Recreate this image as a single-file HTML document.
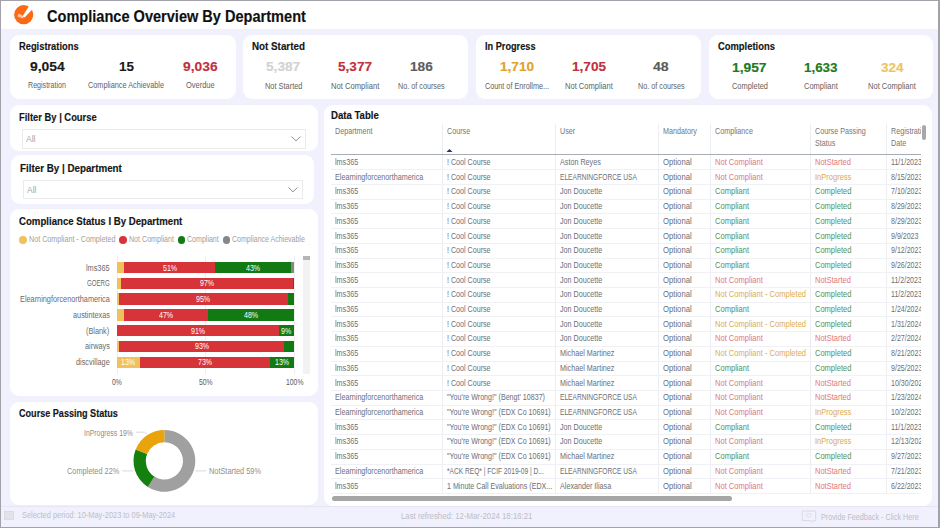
<!DOCTYPE html>
<html><head><meta charset="utf-8">
<style>
*{margin:0;padding:0;box-sizing:border-box}
html,body{width:940px;height:528px;overflow:hidden;background:#f1f1fd}
body{position:relative;font-family:"Liberation Sans", sans-serif;color:#000}
.root{position:absolute;left:0;top:0;width:940px;height:528px}
.a{position:absolute;white-space:nowrap}
.card{position:absolute;background:#fff;border-radius:9px}
</style></head><body><div class="root">

<div class="a" style="left:0;top:0;width:940px;height:28.8px;background:#fff"></div>
<svg class="a" style="left:0;top:0" width="40" height="30" viewBox="0 0 40 30">
<circle cx="23.7" cy="14.7" r="9.6" fill="#fa6a16"/>
<path d="M18.8 13.6 L24 16.4 L23 18.6 L17.4 16.4Z" fill="#fbc4a6"/>
<path d="M29.4 5.6 L33.2 8.4 L24.6 17.4 L22.6 16.3Z" fill="#fff"/>
</svg>
<div class="a" style="left:47.40px;top:8.99px;font-size:15.6px;line-height:15.6px;color:#111;font-weight:700;letter-spacing:0.000px;transform:scaleX(0.9336);transform-origin:0 0;-webkit-text-stroke:0.15px #111">Compliance Overview By Department</div>
<div class="card" style="left:10px;top:35px;width:226px;height:64px"></div>
<div class="a" style="left:18.70px;top:42.08px;font-size:10.3px;line-height:10.3px;color:#151515;font-weight:700;letter-spacing:0.000px;transform:scaleX(0.9055);transform-origin:0 0;-webkit-text-stroke:0.15px #151515">Registrations</div>
<div class="a" style="left:29.80px;top:59.79px;font-size:13.6px;line-height:13.6px;color:#1a1a1a;font-weight:700;letter-spacing:0.000px;transform:scaleX(1.0225);transform-origin:0 0;-webkit-text-stroke:0.15px #1a1a1a">9,054</div>
<div class="a" style="left:28.25px;top:81.12px;font-size:8.6px;line-height:8.6px;color:#5f5f5f;font-weight:400;letter-spacing:0.000px;transform:scaleX(0.8259);transform-origin:0 0">Registration</div>
<div class="a" style="left:118.55px;top:59.79px;font-size:13.6px;line-height:13.6px;color:#1a1a1a;font-weight:700;letter-spacing:0.000px;transform:scaleX(0.9850);transform-origin:0 0;-webkit-text-stroke:0.15px #1a1a1a">15</div>
<div class="a" style="left:88.00px;top:81.12px;font-size:8.6px;line-height:8.6px;color:#5f5f5f;font-weight:400;letter-spacing:0.000px;transform:scaleX(0.8501);transform-origin:0 0">Compliance Achievable</div>
<div class="a" style="left:183.00px;top:59.79px;font-size:13.6px;line-height:13.6px;color:#bf313d;font-weight:700;letter-spacing:0.000px;transform:scaleX(1.0166);transform-origin:0 0;-webkit-text-stroke:0.15px #bf313d">9,036</div>
<div class="a" style="left:185.95px;top:81.12px;font-size:8.6px;line-height:8.6px;color:#5f5f5f;font-weight:400;letter-spacing:0.000px;transform:scaleX(0.8701);transform-origin:0 0">Overdue</div>
<div class="card" style="left:243px;top:35px;width:225px;height:64px"></div>
<div class="a" style="left:251.90px;top:42.08px;font-size:10.3px;line-height:10.3px;color:#151515;font-weight:700;letter-spacing:0.000px;transform:scaleX(0.9530);transform-origin:0 0;-webkit-text-stroke:0.15px #151515">Not Started</div>
<div class="a" style="left:266.20px;top:60.49px;font-size:13.6px;line-height:13.6px;color:#d2d2d2;font-weight:700;letter-spacing:0.000px;transform:scaleX(1.0049);transform-origin:0 0;-webkit-text-stroke:0.15px #d2d2d2">5,387</div>
<div class="a" style="left:264.55px;top:81.82px;font-size:8.6px;line-height:8.6px;color:#5f5f5f;font-weight:400;letter-spacing:0.000px;transform:scaleX(0.8621);transform-origin:0 0">Not Started</div>
<div class="a" style="left:338.30px;top:60.49px;font-size:13.6px;line-height:13.6px;color:#bf313d;font-weight:700;letter-spacing:0.000px;transform:scaleX(0.9990);transform-origin:0 0;-webkit-text-stroke:0.15px #bf313d">5,377</div>
<div class="a" style="left:331.15px;top:81.82px;font-size:8.6px;line-height:8.6px;color:#5f5f5f;font-weight:400;letter-spacing:0.000px;transform:scaleX(0.8864);transform-origin:0 0">Not Compliant</div>
<div class="a" style="left:409.80px;top:60.49px;font-size:13.6px;line-height:13.6px;color:#5c5c5c;font-weight:700;letter-spacing:0.000px;transform:scaleX(1.0048);transform-origin:0 0;-webkit-text-stroke:0.15px #5c5c5c">186</div>
<div class="a" style="left:397.90px;top:81.82px;font-size:8.6px;line-height:8.6px;color:#5f5f5f;font-weight:400;letter-spacing:0.000px;transform:scaleX(0.8404);transform-origin:0 0">No. of courses</div>
<div class="card" style="left:476px;top:35px;width:225px;height:64px"></div>
<div class="a" style="left:484.90px;top:42.08px;font-size:10.3px;line-height:10.3px;color:#151515;font-weight:700;letter-spacing:0.000px;transform:scaleX(0.8911);transform-origin:0 0;-webkit-text-stroke:0.15px #151515">In Progress</div>
<div class="a" style="left:500.00px;top:60.49px;font-size:13.6px;line-height:13.6px;color:#e0a229;font-weight:700;letter-spacing:0.000px;transform:scaleX(0.9990);transform-origin:0 0;-webkit-text-stroke:0.15px #e0a229">1,710</div>
<div class="a" style="left:484.95px;top:81.82px;font-size:8.6px;line-height:8.6px;color:#5f5f5f;font-weight:400;letter-spacing:0.000px;transform:scaleX(0.8434);transform-origin:0 0">Count of Enrollme...</div>
<div class="a" style="left:571.70px;top:60.49px;font-size:13.6px;line-height:13.6px;color:#bf313d;font-weight:700;letter-spacing:0.000px;transform:scaleX(0.9990);transform-origin:0 0;-webkit-text-stroke:0.15px #bf313d">1,705</div>
<div class="a" style="left:564.75px;top:81.82px;font-size:8.6px;line-height:8.6px;color:#5f5f5f;font-weight:400;letter-spacing:0.000px;transform:scaleX(0.8791);transform-origin:0 0">Not Compliant</div>
<div class="a" style="left:652.95px;top:60.49px;font-size:13.6px;line-height:13.6px;color:#5c5c5c;font-weight:700;letter-spacing:0.000px;transform:scaleX(1.0378);transform-origin:0 0;-webkit-text-stroke:0.15px #5c5c5c">48</div>
<div class="a" style="left:637.50px;top:81.82px;font-size:8.6px;line-height:8.6px;color:#5f5f5f;font-weight:400;letter-spacing:0.000px;transform:scaleX(0.8404);transform-origin:0 0">No. of courses</div>
<div class="card" style="left:709px;top:35px;width:224px;height:64px"></div>
<div class="a" style="left:717.90px;top:42.08px;font-size:10.3px;line-height:10.3px;color:#151515;font-weight:700;letter-spacing:0.000px;transform:scaleX(0.9122);transform-origin:0 0;-webkit-text-stroke:0.15px #151515">Completions</div>
<div class="a" style="left:732.45px;top:60.79px;font-size:13.6px;line-height:13.6px;color:#1d7a1d;font-weight:700;letter-spacing:0.000px;transform:scaleX(1.0137);transform-origin:0 0;-webkit-text-stroke:0.15px #1d7a1d">1,957</div>
<div class="a" style="left:731.70px;top:81.92px;font-size:8.6px;line-height:8.6px;color:#5f5f5f;font-weight:400;letter-spacing:0.000px;transform:scaleX(0.8656);transform-origin:0 0">Completed</div>
<div class="a" style="left:804.05px;top:60.79px;font-size:13.6px;line-height:13.6px;color:#1d7a1d;font-weight:700;letter-spacing:0.000px;transform:scaleX(0.9843);transform-origin:0 0;-webkit-text-stroke:0.15px #1d7a1d">1,633</div>
<div class="a" style="left:803.90px;top:81.92px;font-size:8.6px;line-height:8.6px;color:#5f5f5f;font-weight:400;letter-spacing:0.000px;transform:scaleX(0.8730);transform-origin:0 0">Compliant</div>
<div class="a" style="left:880.95px;top:60.79px;font-size:13.6px;line-height:13.6px;color:#ecc466;font-weight:700;letter-spacing:0.000px;transform:scaleX(0.9916);transform-origin:0 0;-webkit-text-stroke:0.15px #ecc466">324</div>
<div class="a" style="left:868.30px;top:81.92px;font-size:8.6px;line-height:8.6px;color:#5f5f5f;font-weight:400;letter-spacing:0.000px;transform:scaleX(0.8772);transform-origin:0 0">Not Compliant</div>
<div class="card" style="left:10px;top:105px;width:307.5px;height:46.4px"></div>
<div class="a" style="left:18.50px;top:112.68px;font-size:10.3px;line-height:10.3px;color:#151515;font-weight:700;letter-spacing:0.000px;transform:scaleX(0.9109);transform-origin:0 0;-webkit-text-stroke:0.15px #151515">Filter By | Course</div>
<div class="a" style="left:21.5px;top:129px;width:284px;height:19.5px;border:1px solid #ebebeb;background:#fff"></div>
<div class="a" style="left:26.00px;top:135.29px;font-size:8.4px;line-height:8.4px;color:#a8a8a8;font-weight:400;letter-spacing:0.000px;transform:scaleX(1.0176);transform-origin:0 0">All</div>
<svg class="a" style="left:290px;top:134.5px" width="12" height="8" viewBox="0 0 12 8"><path d="M1.6 1.6 L6 5.8 L10.4 1.6" stroke="#7a7a7a" stroke-width="0.85" fill="none"/></svg>
<div class="card" style="left:11px;top:155.4px;width:302.6px;height:49px"></div>
<div class="a" style="left:19.80px;top:163.58px;font-size:10.3px;line-height:10.3px;color:#151515;font-weight:700;letter-spacing:0.000px;transform:scaleX(0.9519);transform-origin:0 0;-webkit-text-stroke:0.15px #151515">Filter By | Department</div>
<div class="a" style="left:22.5px;top:180px;width:280px;height:19px;border:1px solid #ebebeb;background:#fff"></div>
<div class="a" style="left:27.40px;top:186.39px;font-size:8.4px;line-height:8.4px;color:#a8a8a8;font-weight:400;letter-spacing:0.000px;transform:scaleX(1.0176);transform-origin:0 0">All</div>
<svg class="a" style="left:287px;top:185.5px" width="12" height="8" viewBox="0 0 12 8"><path d="M1.6 1.6 L6 5.8 L10.4 1.6" stroke="#7a7a7a" stroke-width="0.85" fill="none"/></svg>
<div class="card" style="left:10px;top:209px;width:307.5px;height:187px"></div>
<div class="a" style="left:18.50px;top:217.18px;font-size:10.3px;line-height:10.3px;color:#151515;font-weight:700;letter-spacing:0.000px;transform:scaleX(0.9355);transform-origin:0 0;-webkit-text-stroke:0.15px #151515">Compliance Status I By Department</div>
<div class="a" style="left:19.400000000000002px;top:236.0px;width:7.8px;height:7.8px;border-radius:50%;background:#efc25c"></div>
<div class="a" style="left:29.00px;top:236.46px;font-size:8.2px;line-height:8.2px;color:#a0a0a0;font-weight:400;letter-spacing:0.000px;transform:scaleX(0.8746);transform-origin:0 0">Not Compliant - Completed</div>
<div class="a" style="left:119.3px;top:236.0px;width:7.8px;height:7.8px;border-radius:50%;background:#d63439"></div>
<div class="a" style="left:128.60px;top:236.46px;font-size:8.2px;line-height:8.2px;color:#a0a0a0;font-weight:400;letter-spacing:0.000px;transform:scaleX(0.8661);transform-origin:0 0">Not Compliant</div>
<div class="a" style="left:177.7px;top:236.0px;width:7.8px;height:7.8px;border-radius:50%;background:#127a12"></div>
<div class="a" style="left:186.90px;top:236.46px;font-size:8.2px;line-height:8.2px;color:#a0a0a0;font-weight:400;letter-spacing:0.000px;transform:scaleX(0.8614);transform-origin:0 0">Compliant</div>
<div class="a" style="left:222.5px;top:236.0px;width:7.8px;height:7.8px;border-radius:50%;background:#878787"></div>
<div class="a" style="left:231.80px;top:236.46px;font-size:8.2px;line-height:8.2px;color:#a0a0a0;font-weight:400;letter-spacing:0.000px;transform:scaleX(0.8552);transform-origin:0 0">Compliance Achievable</div>
<div class="a" style="left:116.5px;top:255.5px;width:1px;height:118px;background:#efefef"></div>
<div class="a" style="left:205.1px;top:255.5px;width:1px;height:118px;background:#efefef"></div>
<div class="a" style="left:294.0px;top:255.5px;width:1px;height:118px;background:#efefef"></div>
<div class="a" style="left:303px;top:256px;width:7px;height:118px;background:#f2f2f2"></div>
<div class="a" style="left:303px;top:256px;width:7px;height:3.5px;background:#b5b5b5"></div>
<div class="a" style="left:86.02px;top:263.57px;font-size:8.3px;line-height:8.3px;color:#6a6a6a;font-weight:400;letter-spacing:0.000px;transform:scaleX(0.8813);transform-origin:0 0">lms365</div>
<div class="a" style="left:116.80px;top:261.90px;width:7.63px;height:11.4px;background:#efc25c"></div>
<div class="a" style="left:124.43px;top:261.90px;width:90.83px;height:11.4px;background:#d63439"></div>
<div class="a" style="left:162.78px;top:263.57px;font-size:8.3px;line-height:8.3px;color:#fff;font-weight:400;letter-spacing:0.000px;transform:scaleX(0.8501);transform-origin:0 0">51%</div>
<div class="a" style="left:215.26px;top:261.90px;width:75.57px;height:11.4px;background:#127a12"></div>
<div class="a" style="left:245.98px;top:263.57px;font-size:8.3px;line-height:8.3px;color:#fff;font-weight:400;letter-spacing:0.000px;transform:scaleX(0.8501);transform-origin:0 0">43%</div>
<div class="a" style="left:290.83px;top:261.90px;width:3.37px;height:11.4px;background:#878787"></div>
<div class="a" style="left:86.82px;top:279.37px;font-size:8.3px;line-height:8.3px;color:#6a6a6a;font-weight:400;letter-spacing:0.000px;transform:scaleX(0.7373);transform-origin:0 0">GOERG</div>
<div class="a" style="left:116.80px;top:277.70px;width:4.08px;height:11.4px;background:#efc25c"></div>
<div class="a" style="left:120.88px;top:277.70px;width:172.26px;height:11.4px;background:#d63439"></div>
<div class="a" style="left:199.95px;top:279.37px;font-size:8.3px;line-height:8.3px;color:#fff;font-weight:400;letter-spacing:0.000px;transform:scaleX(0.8501);transform-origin:0 0">97%</div>
<div class="a" style="left:293.14px;top:277.70px;width:1.06px;height:11.4px;background:#127a12"></div>
<div class="a" style="left:19.74px;top:295.07px;font-size:8.3px;line-height:8.3px;color:#6a6a6a;font-weight:400;letter-spacing:0.000px;transform:scaleX(0.8813);transform-origin:0 0">Elearningforcenorthamerica</div>
<div class="a" style="left:116.80px;top:293.40px;width:2.13px;height:11.4px;background:#efc25c"></div>
<div class="a" style="left:118.93px;top:293.40px;width:169.06px;height:11.4px;background:#d63439"></div>
<div class="a" style="left:196.40px;top:295.07px;font-size:8.3px;line-height:8.3px;color:#fff;font-weight:400;letter-spacing:0.000px;transform:scaleX(0.8501);transform-origin:0 0">95%</div>
<div class="a" style="left:287.99px;top:293.40px;width:6.21px;height:11.4px;background:#127a12"></div>
<div class="a" style="left:72.60px;top:310.87px;font-size:8.3px;line-height:8.3px;color:#6a6a6a;font-weight:400;letter-spacing:0.000px;transform:scaleX(0.8813);transform-origin:0 0">austintexas</div>
<div class="a" style="left:116.80px;top:309.20px;width:7.63px;height:11.4px;background:#efc25c"></div>
<div class="a" style="left:124.43px;top:309.20px;width:83.91px;height:11.4px;background:#d63439"></div>
<div class="a" style="left:159.32px;top:310.87px;font-size:8.3px;line-height:8.3px;color:#fff;font-weight:400;letter-spacing:0.000px;transform:scaleX(0.8501);transform-origin:0 0">47%</div>
<div class="a" style="left:208.34px;top:309.20px;width:85.86px;height:11.4px;background:#127a12"></div>
<div class="a" style="left:244.21px;top:310.87px;font-size:8.3px;line-height:8.3px;color:#fff;font-weight:400;letter-spacing:0.000px;transform:scaleX(0.8501);transform-origin:0 0">48%</div>
<div class="a" style="left:86.43px;top:326.57px;font-size:8.3px;line-height:8.3px;color:#6a6a6a;font-weight:400;letter-spacing:0.000px;transform:scaleX(0.8813);transform-origin:0 0">(Blank)</div>
<div class="a" style="left:116.80px;top:324.90px;width:162.14px;height:11.4px;background:#d63439"></div>
<div class="a" style="left:190.81px;top:326.57px;font-size:8.3px;line-height:8.3px;color:#fff;font-weight:400;letter-spacing:0.000px;transform:scaleX(0.8501);transform-origin:0 0">91%</div>
<div class="a" style="left:278.94px;top:324.90px;width:15.26px;height:11.4px;background:#127a12"></div>
<div class="a" style="left:281.47px;top:326.57px;font-size:8.3px;line-height:8.3px;color:#fff;font-weight:400;letter-spacing:0.000px;transform:scaleX(0.8501);transform-origin:0 0">9%</div>
<div class="a" style="left:84.80px;top:342.27px;font-size:8.3px;line-height:8.3px;color:#6a6a6a;font-weight:400;letter-spacing:0.000px;transform:scaleX(0.8813);transform-origin:0 0">airways</div>
<div class="a" style="left:116.80px;top:340.60px;width:2.31px;height:11.4px;background:#efc25c"></div>
<div class="a" style="left:119.11px;top:340.60px;width:165.34px;height:11.4px;background:#d63439"></div>
<div class="a" style="left:194.71px;top:342.27px;font-size:8.3px;line-height:8.3px;color:#fff;font-weight:400;letter-spacing:0.000px;transform:scaleX(0.8501);transform-origin:0 0">93%</div>
<div class="a" style="left:284.44px;top:340.60px;width:9.76px;height:11.4px;background:#127a12"></div>
<div class="a" style="left:75.85px;top:358.27px;font-size:8.3px;line-height:8.3px;color:#6a6a6a;font-weight:400;letter-spacing:0.000px;transform:scaleX(0.8813);transform-origin:0 0">discvillage</div>
<div class="a" style="left:116.80px;top:356.60px;width:23.42px;height:11.4px;background:#efc25c"></div>
<div class="a" style="left:121.45px;top:358.27px;font-size:8.3px;line-height:8.3px;color:#fff;font-weight:400;letter-spacing:0.000px;transform:scaleX(0.8501);transform-origin:0 0">13%</div>
<div class="a" style="left:140.22px;top:356.60px;width:129.32px;height:11.4px;background:#d63439"></div>
<div class="a" style="left:197.82px;top:358.27px;font-size:8.3px;line-height:8.3px;color:#fff;font-weight:400;letter-spacing:0.000px;transform:scaleX(0.8501);transform-origin:0 0">73%</div>
<div class="a" style="left:269.54px;top:356.60px;width:24.66px;height:11.4px;background:#127a12"></div>
<div class="a" style="left:274.81px;top:358.27px;font-size:8.3px;line-height:8.3px;color:#fff;font-weight:400;letter-spacing:0.000px;transform:scaleX(0.8501);transform-origin:0 0">13%</div>
<div class="a" style="left:111.86px;top:378.66px;font-size:8.2px;line-height:8.2px;color:#5a5a5a;font-weight:400;letter-spacing:0.000px;transform:scaleX(0.8341);transform-origin:0 0">0%</div>
<div class="a" style="left:198.95px;top:378.66px;font-size:8.2px;line-height:8.2px;color:#5a5a5a;font-weight:400;letter-spacing:0.000px;transform:scaleX(0.8341);transform-origin:0 0">50%</div>
<div class="a" style="left:285.95px;top:378.66px;font-size:8.2px;line-height:8.2px;color:#5a5a5a;font-weight:400;letter-spacing:0.000px;transform:scaleX(0.8341);transform-origin:0 0">100%</div>
<div class="card" style="left:10px;top:402px;width:307.5px;height:102.5px"></div>
<div class="a" style="left:18.50px;top:409.38px;font-size:10.3px;line-height:10.3px;color:#151515;font-weight:700;letter-spacing:0.000px;transform:scaleX(0.8815);transform-origin:0 0;-webkit-text-stroke:0.15px #151515">Course Passing Status</div>
<svg class="a" style="left:0;top:0" width="320" height="528" viewBox="0 0 320 528">
<path d="M164.40 430.00 A30.9 30.9 0 1 1 147.84 486.99 L154.43 476.60 A18.6 18.6 0 1 0 164.40 442.30Z" fill="#a0a0a0"/>
<path d="M147.84 486.99 A30.9 30.9 0 0 1 135.67 449.52 L147.11 454.05 A18.6 18.6 0 0 0 154.43 476.60Z" fill="#13800f"/>
<path d="M135.67 449.52 A30.9 30.9 0 0 1 164.40 430.00 L164.40 442.30 A18.6 18.6 0 0 0 147.11 454.05Z" fill="#e9a30b"/>
<path d="M136 432.2 H144.7 L147.5 434.8" stroke="#cfcfcf" stroke-width="0.8" fill="none"/>
<path d="M122.3 470.9 H133.5" stroke="#cfcfcf" stroke-width="0.8" fill="none"/>
<path d="M195.5 470.9 H206" stroke="#cfcfcf" stroke-width="0.8" fill="none"/>
</svg>
<div class="a" style="left:84.40px;top:429.07px;font-size:8.3px;line-height:8.3px;color:#8e8e8e;font-weight:400;letter-spacing:0.000px;transform:scaleX(0.8281);transform-origin:0 0">InProgress 19%</div>
<div class="a" style="left:67.00px;top:467.37px;font-size:8.3px;line-height:8.3px;color:#8e8e8e;font-weight:400;letter-spacing:0.000px;transform:scaleX(0.8856);transform-origin:0 0">Completed 22%</div>
<div class="a" style="left:209.30px;top:467.37px;font-size:8.3px;line-height:8.3px;color:#8e8e8e;font-weight:400;letter-spacing:0.000px;transform:scaleX(0.8875);transform-origin:0 0">NotStarted 59%</div>
<div class="card" style="left:323.5px;top:105px;width:608px;height:400.5px"></div>
<div class="a" style="left:331.00px;top:111.18px;font-size:10.3px;line-height:10.3px;color:#151515;font-weight:700;letter-spacing:0.000px;transform:scaleX(0.9313);transform-origin:0 0;-webkit-text-stroke:0.15px #151515">Data Table</div>
<div class="a" style="left:331px;top:124px;width:590px;height:370px;overflow:hidden">
<div class="a" style="left:3.80px;top:4.36px;font-size:8.2px;line-height:8.2px;color:#767676;transform:scaleX(0.8780);transform-origin:0 0">Department</div>
<div class="a" style="left:116.30px;top:4.36px;font-size:8.2px;line-height:8.2px;color:#767676;transform:scaleX(0.8780);transform-origin:0 0">Course</div>
<div class="a" style="left:229.10px;top:4.36px;font-size:8.2px;line-height:8.2px;color:#767676;transform:scaleX(0.8780);transform-origin:0 0">User</div>
<div class="a" style="left:332.10px;top:4.36px;font-size:8.2px;line-height:8.2px;color:#767676;transform:scaleX(0.8780);transform-origin:0 0">Mandatory</div>
<div class="a" style="left:383.80px;top:4.36px;font-size:8.2px;line-height:8.2px;color:#767676;transform:scaleX(0.8780);transform-origin:0 0">Compliance</div>
<div class="a" style="left:484.20px;top:4.36px;font-size:8.2px;line-height:8.2px;color:#767676;transform:scaleX(0.8780);transform-origin:0 0">Course Passing</div>
<div class="a" style="left:559.70px;top:4.36px;font-size:8.2px;line-height:8.2px;color:#767676;transform:scaleX(0.8780);transform-origin:0 0">Registrati</div>
<div class="a" style="left:484.20px;top:16.16px;font-size:8.2px;line-height:8.2px;color:#767676;transform:scaleX(0.8780);transform-origin:0 0">Status</div>
<div class="a" style="left:559.70px;top:16.16px;font-size:8.2px;line-height:8.2px;color:#767676;transform:scaleX(0.8780);transform-origin:0 0">Date</div>
<div class="a" style="left:111.00px;top:0;width:1px;height:370px;background:#eceef2"></div>
<div class="a" style="left:223.80px;top:0;width:1px;height:370px;background:#eceef2"></div>
<div class="a" style="left:326.80px;top:0;width:1px;height:370px;background:#eceef2"></div>
<div class="a" style="left:378.50px;top:0;width:1px;height:370px;background:#eceef2"></div>
<div class="a" style="left:478.90px;top:0;width:1px;height:370px;background:#eceef2"></div>
<div class="a" style="left:555.00px;top:0;width:1px;height:370px;background:#eceef2"></div>
<div class="a" style="left:0;top:29.599999999999994px;width:590px;height:1.4px;background:#a7acb5"></div>
<svg class="a" style="left:115px;top:23.5px" width="7" height="5" viewBox="0 0 7 5"><path d="M0.5 4 L3.5 1 L6.5 4Z" fill="#2a3550"/></svg>
<div class="a" style="left:0;top:45.30px;width:590px;height:1px;background:#f0f1f4"></div>
<div class="a" style="left:3.80px;top:34.96px;font-size:8.2px;line-height:8.2px;color:#6a6f79;transform:scaleX(0.8780);transform-origin:0 0">lms365</div>
<div class="a" style="left:116.30px;top:34.96px;font-size:8.2px;line-height:8.2px;color:#6a6f79;transform:scaleX(0.8693);transform-origin:0 0">! Cool Course</div>
<div class="a" style="left:229.10px;top:34.96px;font-size:8.2px;line-height:8.2px;color:#6a6f79;transform:scaleX(0.8780);transform-origin:0 0">Aston Reyes</div>
<div class="a" style="left:332.10px;top:34.96px;font-size:8.2px;line-height:8.2px;color:#6a6f79;transform:scaleX(0.9395);transform-origin:0 0">Optional</div>
<div class="a" style="left:383.80px;top:34.96px;font-size:8.2px;line-height:8.2px;color:#e07880;transform:scaleX(0.9220);transform-origin:0 0">Not Compliant</div>
<div class="a" style="left:484.20px;top:34.96px;font-size:8.2px;line-height:8.2px;color:#e07880;transform:scaleX(0.9176);transform-origin:0 0">NotStarted</div>
<div class="a" style="left:559.70px;top:34.96px;font-size:8.2px;line-height:8.2px;color:#6a6f79;transform:scaleX(0.8605);transform-origin:0 0">11/1/2023</div>
<div class="a" style="left:0;top:60.01px;width:590px;height:1px;background:#f0f1f4"></div>
<div class="a" style="left:3.80px;top:49.67px;font-size:8.2px;line-height:8.2px;color:#6a6f79;transform:scaleX(0.8780);transform-origin:0 0">Elearningforcenorthamerica</div>
<div class="a" style="left:116.30px;top:49.67px;font-size:8.2px;line-height:8.2px;color:#6a6f79;transform:scaleX(0.8693);transform-origin:0 0">! Cool Course</div>
<div class="a" style="left:229.10px;top:49.67px;font-size:8.2px;line-height:8.2px;color:#6a6f79;transform:scaleX(0.8078);transform-origin:0 0">ELEARNINGFORCE USA</div>
<div class="a" style="left:332.10px;top:49.67px;font-size:8.2px;line-height:8.2px;color:#6a6f79;transform:scaleX(0.9395);transform-origin:0 0">Optional</div>
<div class="a" style="left:383.80px;top:49.67px;font-size:8.2px;line-height:8.2px;color:#e07880;transform:scaleX(0.9220);transform-origin:0 0">Not Compliant</div>
<div class="a" style="left:484.20px;top:49.67px;font-size:8.2px;line-height:8.2px;color:#ddaa45;transform:scaleX(0.9176);transform-origin:0 0">InProgress</div>
<div class="a" style="left:559.70px;top:49.67px;font-size:8.2px;line-height:8.2px;color:#6a6f79;transform:scaleX(0.8605);transform-origin:0 0">8/15/2023</div>
<div class="a" style="left:0;top:74.72px;width:590px;height:1px;background:#f0f1f4"></div>
<div class="a" style="left:3.80px;top:64.38px;font-size:8.2px;line-height:8.2px;color:#6a6f79;transform:scaleX(0.8780);transform-origin:0 0">lms365</div>
<div class="a" style="left:116.30px;top:64.38px;font-size:8.2px;line-height:8.2px;color:#6a6f79;transform:scaleX(0.8693);transform-origin:0 0">! Cool Course</div>
<div class="a" style="left:229.10px;top:64.38px;font-size:8.2px;line-height:8.2px;color:#6a6f79;transform:scaleX(0.8780);transform-origin:0 0">Jon Doucette</div>
<div class="a" style="left:332.10px;top:64.38px;font-size:8.2px;line-height:8.2px;color:#6a6f79;transform:scaleX(0.9395);transform-origin:0 0">Optional</div>
<div class="a" style="left:383.80px;top:64.38px;font-size:8.2px;line-height:8.2px;color:#579250;transform:scaleX(0.9220);transform-origin:0 0">Compliant</div>
<div class="a" style="left:484.20px;top:64.38px;font-size:8.2px;line-height:8.2px;color:#579250;transform:scaleX(0.9176);transform-origin:0 0">Completed</div>
<div class="a" style="left:559.70px;top:64.38px;font-size:8.2px;line-height:8.2px;color:#6a6f79;transform:scaleX(0.8605);transform-origin:0 0">7/10/2023</div>
<div class="a" style="left:0;top:89.43px;width:590px;height:1px;background:#f0f1f4"></div>
<div class="a" style="left:3.80px;top:79.09px;font-size:8.2px;line-height:8.2px;color:#6a6f79;transform:scaleX(0.8780);transform-origin:0 0">lms365</div>
<div class="a" style="left:116.30px;top:79.09px;font-size:8.2px;line-height:8.2px;color:#6a6f79;transform:scaleX(0.8693);transform-origin:0 0">! Cool Course</div>
<div class="a" style="left:229.10px;top:79.09px;font-size:8.2px;line-height:8.2px;color:#6a6f79;transform:scaleX(0.8780);transform-origin:0 0">Jon Doucette</div>
<div class="a" style="left:332.10px;top:79.09px;font-size:8.2px;line-height:8.2px;color:#6a6f79;transform:scaleX(0.9395);transform-origin:0 0">Optional</div>
<div class="a" style="left:383.80px;top:79.09px;font-size:8.2px;line-height:8.2px;color:#579250;transform:scaleX(0.9220);transform-origin:0 0">Compliant</div>
<div class="a" style="left:484.20px;top:79.09px;font-size:8.2px;line-height:8.2px;color:#579250;transform:scaleX(0.9176);transform-origin:0 0">Completed</div>
<div class="a" style="left:559.70px;top:79.09px;font-size:8.2px;line-height:8.2px;color:#6a6f79;transform:scaleX(0.8605);transform-origin:0 0">8/29/2023</div>
<div class="a" style="left:0;top:104.14px;width:590px;height:1px;background:#f0f1f4"></div>
<div class="a" style="left:3.80px;top:93.80px;font-size:8.2px;line-height:8.2px;color:#6a6f79;transform:scaleX(0.8780);transform-origin:0 0">lms365</div>
<div class="a" style="left:116.30px;top:93.80px;font-size:8.2px;line-height:8.2px;color:#6a6f79;transform:scaleX(0.8693);transform-origin:0 0">! Cool Course</div>
<div class="a" style="left:229.10px;top:93.80px;font-size:8.2px;line-height:8.2px;color:#6a6f79;transform:scaleX(0.8780);transform-origin:0 0">Jon Doucette</div>
<div class="a" style="left:332.10px;top:93.80px;font-size:8.2px;line-height:8.2px;color:#6a6f79;transform:scaleX(0.9395);transform-origin:0 0">Optional</div>
<div class="a" style="left:383.80px;top:93.80px;font-size:8.2px;line-height:8.2px;color:#579250;transform:scaleX(0.9220);transform-origin:0 0">Compliant</div>
<div class="a" style="left:484.20px;top:93.80px;font-size:8.2px;line-height:8.2px;color:#579250;transform:scaleX(0.9176);transform-origin:0 0">Completed</div>
<div class="a" style="left:559.70px;top:93.80px;font-size:8.2px;line-height:8.2px;color:#6a6f79;transform:scaleX(0.8605);transform-origin:0 0">8/29/2023</div>
<div class="a" style="left:0;top:118.85px;width:590px;height:1px;background:#f0f1f4"></div>
<div class="a" style="left:3.80px;top:108.51px;font-size:8.2px;line-height:8.2px;color:#6a6f79;transform:scaleX(0.8780);transform-origin:0 0">lms365</div>
<div class="a" style="left:116.30px;top:108.51px;font-size:8.2px;line-height:8.2px;color:#6a6f79;transform:scaleX(0.8693);transform-origin:0 0">! Cool Course</div>
<div class="a" style="left:229.10px;top:108.51px;font-size:8.2px;line-height:8.2px;color:#6a6f79;transform:scaleX(0.8780);transform-origin:0 0">Jon Doucette</div>
<div class="a" style="left:332.10px;top:108.51px;font-size:8.2px;line-height:8.2px;color:#6a6f79;transform:scaleX(0.9395);transform-origin:0 0">Optional</div>
<div class="a" style="left:383.80px;top:108.51px;font-size:8.2px;line-height:8.2px;color:#579250;transform:scaleX(0.9220);transform-origin:0 0">Compliant</div>
<div class="a" style="left:484.20px;top:108.51px;font-size:8.2px;line-height:8.2px;color:#579250;transform:scaleX(0.9176);transform-origin:0 0">Completed</div>
<div class="a" style="left:559.70px;top:108.51px;font-size:8.2px;line-height:8.2px;color:#6a6f79;transform:scaleX(0.8605);transform-origin:0 0">9/9/2023</div>
<div class="a" style="left:0;top:133.56px;width:590px;height:1px;background:#f0f1f4"></div>
<div class="a" style="left:3.80px;top:123.22px;font-size:8.2px;line-height:8.2px;color:#6a6f79;transform:scaleX(0.8780);transform-origin:0 0">lms365</div>
<div class="a" style="left:116.30px;top:123.22px;font-size:8.2px;line-height:8.2px;color:#6a6f79;transform:scaleX(0.8693);transform-origin:0 0">! Cool Course</div>
<div class="a" style="left:229.10px;top:123.22px;font-size:8.2px;line-height:8.2px;color:#6a6f79;transform:scaleX(0.8780);transform-origin:0 0">Jon Doucette</div>
<div class="a" style="left:332.10px;top:123.22px;font-size:8.2px;line-height:8.2px;color:#6a6f79;transform:scaleX(0.9395);transform-origin:0 0">Optional</div>
<div class="a" style="left:383.80px;top:123.22px;font-size:8.2px;line-height:8.2px;color:#579250;transform:scaleX(0.9220);transform-origin:0 0">Compliant</div>
<div class="a" style="left:484.20px;top:123.22px;font-size:8.2px;line-height:8.2px;color:#579250;transform:scaleX(0.9176);transform-origin:0 0">Completed</div>
<div class="a" style="left:559.70px;top:123.22px;font-size:8.2px;line-height:8.2px;color:#6a6f79;transform:scaleX(0.8605);transform-origin:0 0">9/12/2023</div>
<div class="a" style="left:0;top:148.27px;width:590px;height:1px;background:#f0f1f4"></div>
<div class="a" style="left:3.80px;top:137.93px;font-size:8.2px;line-height:8.2px;color:#6a6f79;transform:scaleX(0.8780);transform-origin:0 0">lms365</div>
<div class="a" style="left:116.30px;top:137.93px;font-size:8.2px;line-height:8.2px;color:#6a6f79;transform:scaleX(0.8693);transform-origin:0 0">! Cool Course</div>
<div class="a" style="left:229.10px;top:137.93px;font-size:8.2px;line-height:8.2px;color:#6a6f79;transform:scaleX(0.8780);transform-origin:0 0">Jon Doucette</div>
<div class="a" style="left:332.10px;top:137.93px;font-size:8.2px;line-height:8.2px;color:#6a6f79;transform:scaleX(0.9395);transform-origin:0 0">Optional</div>
<div class="a" style="left:383.80px;top:137.93px;font-size:8.2px;line-height:8.2px;color:#579250;transform:scaleX(0.9220);transform-origin:0 0">Compliant</div>
<div class="a" style="left:484.20px;top:137.93px;font-size:8.2px;line-height:8.2px;color:#579250;transform:scaleX(0.9176);transform-origin:0 0">Completed</div>
<div class="a" style="left:559.70px;top:137.93px;font-size:8.2px;line-height:8.2px;color:#6a6f79;transform:scaleX(0.8605);transform-origin:0 0">9/26/2023</div>
<div class="a" style="left:0;top:162.98px;width:590px;height:1px;background:#f0f1f4"></div>
<div class="a" style="left:3.80px;top:152.64px;font-size:8.2px;line-height:8.2px;color:#6a6f79;transform:scaleX(0.8780);transform-origin:0 0">lms365</div>
<div class="a" style="left:116.30px;top:152.64px;font-size:8.2px;line-height:8.2px;color:#6a6f79;transform:scaleX(0.8693);transform-origin:0 0">! Cool Course</div>
<div class="a" style="left:229.10px;top:152.64px;font-size:8.2px;line-height:8.2px;color:#6a6f79;transform:scaleX(0.8780);transform-origin:0 0">Jon Doucette</div>
<div class="a" style="left:332.10px;top:152.64px;font-size:8.2px;line-height:8.2px;color:#6a6f79;transform:scaleX(0.9395);transform-origin:0 0">Optional</div>
<div class="a" style="left:383.80px;top:152.64px;font-size:8.2px;line-height:8.2px;color:#e07880;transform:scaleX(0.9220);transform-origin:0 0">Not Compliant</div>
<div class="a" style="left:484.20px;top:152.64px;font-size:8.2px;line-height:8.2px;color:#e07880;transform:scaleX(0.9176);transform-origin:0 0">NotStarted</div>
<div class="a" style="left:559.70px;top:152.64px;font-size:8.2px;line-height:8.2px;color:#6a6f79;transform:scaleX(0.8605);transform-origin:0 0">11/2/2023</div>
<div class="a" style="left:0;top:177.69px;width:590px;height:1px;background:#f0f1f4"></div>
<div class="a" style="left:3.80px;top:167.35px;font-size:8.2px;line-height:8.2px;color:#6a6f79;transform:scaleX(0.8780);transform-origin:0 0">lms365</div>
<div class="a" style="left:116.30px;top:167.35px;font-size:8.2px;line-height:8.2px;color:#6a6f79;transform:scaleX(0.8693);transform-origin:0 0">! Cool Course</div>
<div class="a" style="left:229.10px;top:167.35px;font-size:8.2px;line-height:8.2px;color:#6a6f79;transform:scaleX(0.8780);transform-origin:0 0">Jon Doucette</div>
<div class="a" style="left:332.10px;top:167.35px;font-size:8.2px;line-height:8.2px;color:#6a6f79;transform:scaleX(0.9395);transform-origin:0 0">Optional</div>
<div class="a" style="left:383.80px;top:167.35px;font-size:8.2px;line-height:8.2px;color:#dcad50;transform:scaleX(0.9220);transform-origin:0 0">Not Compliant - Completed</div>
<div class="a" style="left:484.20px;top:167.35px;font-size:8.2px;line-height:8.2px;color:#579250;transform:scaleX(0.9176);transform-origin:0 0">Completed</div>
<div class="a" style="left:559.70px;top:167.35px;font-size:8.2px;line-height:8.2px;color:#6a6f79;transform:scaleX(0.8605);transform-origin:0 0">11/2/2023</div>
<div class="a" style="left:0;top:192.40px;width:590px;height:1px;background:#f0f1f4"></div>
<div class="a" style="left:3.80px;top:182.06px;font-size:8.2px;line-height:8.2px;color:#6a6f79;transform:scaleX(0.8780);transform-origin:0 0">lms365</div>
<div class="a" style="left:116.30px;top:182.06px;font-size:8.2px;line-height:8.2px;color:#6a6f79;transform:scaleX(0.8693);transform-origin:0 0">! Cool Course</div>
<div class="a" style="left:229.10px;top:182.06px;font-size:8.2px;line-height:8.2px;color:#6a6f79;transform:scaleX(0.8780);transform-origin:0 0">Jon Doucette</div>
<div class="a" style="left:332.10px;top:182.06px;font-size:8.2px;line-height:8.2px;color:#6a6f79;transform:scaleX(0.9395);transform-origin:0 0">Optional</div>
<div class="a" style="left:383.80px;top:182.06px;font-size:8.2px;line-height:8.2px;color:#579250;transform:scaleX(0.9220);transform-origin:0 0">Compliant</div>
<div class="a" style="left:484.20px;top:182.06px;font-size:8.2px;line-height:8.2px;color:#579250;transform:scaleX(0.9176);transform-origin:0 0">Completed</div>
<div class="a" style="left:559.70px;top:182.06px;font-size:8.2px;line-height:8.2px;color:#6a6f79;transform:scaleX(0.8605);transform-origin:0 0">1/24/2024</div>
<div class="a" style="left:0;top:207.11px;width:590px;height:1px;background:#f0f1f4"></div>
<div class="a" style="left:3.80px;top:196.77px;font-size:8.2px;line-height:8.2px;color:#6a6f79;transform:scaleX(0.8780);transform-origin:0 0">lms365</div>
<div class="a" style="left:116.30px;top:196.77px;font-size:8.2px;line-height:8.2px;color:#6a6f79;transform:scaleX(0.8693);transform-origin:0 0">! Cool Course</div>
<div class="a" style="left:229.10px;top:196.77px;font-size:8.2px;line-height:8.2px;color:#6a6f79;transform:scaleX(0.8780);transform-origin:0 0">Jon Doucette</div>
<div class="a" style="left:332.10px;top:196.77px;font-size:8.2px;line-height:8.2px;color:#6a6f79;transform:scaleX(0.9395);transform-origin:0 0">Optional</div>
<div class="a" style="left:383.80px;top:196.77px;font-size:8.2px;line-height:8.2px;color:#dcad50;transform:scaleX(0.9220);transform-origin:0 0">Not Compliant - Completed</div>
<div class="a" style="left:484.20px;top:196.77px;font-size:8.2px;line-height:8.2px;color:#579250;transform:scaleX(0.9176);transform-origin:0 0">Completed</div>
<div class="a" style="left:559.70px;top:196.77px;font-size:8.2px;line-height:8.2px;color:#6a6f79;transform:scaleX(0.8605);transform-origin:0 0">1/31/2024</div>
<div class="a" style="left:0;top:221.82px;width:590px;height:1px;background:#f0f1f4"></div>
<div class="a" style="left:3.80px;top:211.48px;font-size:8.2px;line-height:8.2px;color:#6a6f79;transform:scaleX(0.8780);transform-origin:0 0">lms365</div>
<div class="a" style="left:116.30px;top:211.48px;font-size:8.2px;line-height:8.2px;color:#6a6f79;transform:scaleX(0.8693);transform-origin:0 0">! Cool Course</div>
<div class="a" style="left:229.10px;top:211.48px;font-size:8.2px;line-height:8.2px;color:#6a6f79;transform:scaleX(0.8780);transform-origin:0 0">Jon Doucette</div>
<div class="a" style="left:332.10px;top:211.48px;font-size:8.2px;line-height:8.2px;color:#6a6f79;transform:scaleX(0.9395);transform-origin:0 0">Optional</div>
<div class="a" style="left:383.80px;top:211.48px;font-size:8.2px;line-height:8.2px;color:#e07880;transform:scaleX(0.9220);transform-origin:0 0">Not Compliant</div>
<div class="a" style="left:484.20px;top:211.48px;font-size:8.2px;line-height:8.2px;color:#e07880;transform:scaleX(0.9176);transform-origin:0 0">NotStarted</div>
<div class="a" style="left:559.70px;top:211.48px;font-size:8.2px;line-height:8.2px;color:#6a6f79;transform:scaleX(0.8605);transform-origin:0 0">2/27/2024</div>
<div class="a" style="left:0;top:236.53px;width:590px;height:1px;background:#f0f1f4"></div>
<div class="a" style="left:3.80px;top:226.19px;font-size:8.2px;line-height:8.2px;color:#6a6f79;transform:scaleX(0.8780);transform-origin:0 0">lms365</div>
<div class="a" style="left:116.30px;top:226.19px;font-size:8.2px;line-height:8.2px;color:#6a6f79;transform:scaleX(0.8693);transform-origin:0 0">! Cool Course</div>
<div class="a" style="left:229.10px;top:226.19px;font-size:8.2px;line-height:8.2px;color:#6a6f79;transform:scaleX(0.8780);transform-origin:0 0">Michael Martinez</div>
<div class="a" style="left:332.10px;top:226.19px;font-size:8.2px;line-height:8.2px;color:#6a6f79;transform:scaleX(0.9395);transform-origin:0 0">Optional</div>
<div class="a" style="left:383.80px;top:226.19px;font-size:8.2px;line-height:8.2px;color:#dcad50;transform:scaleX(0.9220);transform-origin:0 0">Not Compliant - Completed</div>
<div class="a" style="left:484.20px;top:226.19px;font-size:8.2px;line-height:8.2px;color:#579250;transform:scaleX(0.9176);transform-origin:0 0">Completed</div>
<div class="a" style="left:559.70px;top:226.19px;font-size:8.2px;line-height:8.2px;color:#6a6f79;transform:scaleX(0.8605);transform-origin:0 0">8/21/2023</div>
<div class="a" style="left:0;top:251.24px;width:590px;height:1px;background:#f0f1f4"></div>
<div class="a" style="left:3.80px;top:240.90px;font-size:8.2px;line-height:8.2px;color:#6a6f79;transform:scaleX(0.8780);transform-origin:0 0">lms365</div>
<div class="a" style="left:116.30px;top:240.90px;font-size:8.2px;line-height:8.2px;color:#6a6f79;transform:scaleX(0.8693);transform-origin:0 0">! Cool Course</div>
<div class="a" style="left:229.10px;top:240.90px;font-size:8.2px;line-height:8.2px;color:#6a6f79;transform:scaleX(0.8780);transform-origin:0 0">Michael Martinez</div>
<div class="a" style="left:332.10px;top:240.90px;font-size:8.2px;line-height:8.2px;color:#6a6f79;transform:scaleX(0.9395);transform-origin:0 0">Optional</div>
<div class="a" style="left:383.80px;top:240.90px;font-size:8.2px;line-height:8.2px;color:#579250;transform:scaleX(0.9220);transform-origin:0 0">Compliant</div>
<div class="a" style="left:484.20px;top:240.90px;font-size:8.2px;line-height:8.2px;color:#579250;transform:scaleX(0.9176);transform-origin:0 0">Completed</div>
<div class="a" style="left:559.70px;top:240.90px;font-size:8.2px;line-height:8.2px;color:#6a6f79;transform:scaleX(0.8605);transform-origin:0 0">9/25/2023</div>
<div class="a" style="left:0;top:265.95px;width:590px;height:1px;background:#f0f1f4"></div>
<div class="a" style="left:3.80px;top:255.61px;font-size:8.2px;line-height:8.2px;color:#6a6f79;transform:scaleX(0.8780);transform-origin:0 0">lms365</div>
<div class="a" style="left:116.30px;top:255.61px;font-size:8.2px;line-height:8.2px;color:#6a6f79;transform:scaleX(0.8693);transform-origin:0 0">! Cool Course</div>
<div class="a" style="left:229.10px;top:255.61px;font-size:8.2px;line-height:8.2px;color:#6a6f79;transform:scaleX(0.8780);transform-origin:0 0">Michael Martinez</div>
<div class="a" style="left:332.10px;top:255.61px;font-size:8.2px;line-height:8.2px;color:#6a6f79;transform:scaleX(0.9395);transform-origin:0 0">Optional</div>
<div class="a" style="left:383.80px;top:255.61px;font-size:8.2px;line-height:8.2px;color:#e07880;transform:scaleX(0.9220);transform-origin:0 0">Not Compliant</div>
<div class="a" style="left:484.20px;top:255.61px;font-size:8.2px;line-height:8.2px;color:#e07880;transform:scaleX(0.9176);transform-origin:0 0">NotStarted</div>
<div class="a" style="left:559.70px;top:255.61px;font-size:8.2px;line-height:8.2px;color:#6a6f79;transform:scaleX(0.8605);transform-origin:0 0">10/30/2023</div>
<div class="a" style="left:0;top:280.66px;width:590px;height:1px;background:#f0f1f4"></div>
<div class="a" style="left:3.80px;top:270.32px;font-size:8.2px;line-height:8.2px;color:#6a6f79;transform:scaleX(0.8780);transform-origin:0 0">Elearningforcenorthamerica</div>
<div class="a" style="left:116.30px;top:270.32px;font-size:8.2px;line-height:8.2px;color:#6a6f79;transform:scaleX(0.8693);transform-origin:0 0">&quot;You&#x27;re Wrong!&quot; (Bengt&#x27; 10837)</div>
<div class="a" style="left:229.10px;top:270.32px;font-size:8.2px;line-height:8.2px;color:#6a6f79;transform:scaleX(0.8078);transform-origin:0 0">ELEARNINGFORCE USA</div>
<div class="a" style="left:332.10px;top:270.32px;font-size:8.2px;line-height:8.2px;color:#6a6f79;transform:scaleX(0.9395);transform-origin:0 0">Optional</div>
<div class="a" style="left:383.80px;top:270.32px;font-size:8.2px;line-height:8.2px;color:#e07880;transform:scaleX(0.9220);transform-origin:0 0">Not Compliant</div>
<div class="a" style="left:484.20px;top:270.32px;font-size:8.2px;line-height:8.2px;color:#e07880;transform:scaleX(0.9176);transform-origin:0 0">NotStarted</div>
<div class="a" style="left:559.70px;top:270.32px;font-size:8.2px;line-height:8.2px;color:#6a6f79;transform:scaleX(0.8605);transform-origin:0 0">1/23/2024</div>
<div class="a" style="left:0;top:295.37px;width:590px;height:1px;background:#f0f1f4"></div>
<div class="a" style="left:3.80px;top:285.03px;font-size:8.2px;line-height:8.2px;color:#6a6f79;transform:scaleX(0.8780);transform-origin:0 0">Elearningforcenorthamerica</div>
<div class="a" style="left:116.30px;top:285.03px;font-size:8.2px;line-height:8.2px;color:#6a6f79;transform:scaleX(0.8693);transform-origin:0 0">&quot;You&#x27;re Wrong!&quot; (EDX Co 10691)</div>
<div class="a" style="left:229.10px;top:285.03px;font-size:8.2px;line-height:8.2px;color:#6a6f79;transform:scaleX(0.8078);transform-origin:0 0">ELEARNINGFORCE USA</div>
<div class="a" style="left:332.10px;top:285.03px;font-size:8.2px;line-height:8.2px;color:#6a6f79;transform:scaleX(0.9395);transform-origin:0 0">Optional</div>
<div class="a" style="left:383.80px;top:285.03px;font-size:8.2px;line-height:8.2px;color:#e07880;transform:scaleX(0.9220);transform-origin:0 0">Not Compliant</div>
<div class="a" style="left:484.20px;top:285.03px;font-size:8.2px;line-height:8.2px;color:#ddaa45;transform:scaleX(0.9176);transform-origin:0 0">InProgress</div>
<div class="a" style="left:559.70px;top:285.03px;font-size:8.2px;line-height:8.2px;color:#6a6f79;transform:scaleX(0.8605);transform-origin:0 0">10/2/2023</div>
<div class="a" style="left:0;top:310.08px;width:590px;height:1px;background:#f0f1f4"></div>
<div class="a" style="left:3.80px;top:299.74px;font-size:8.2px;line-height:8.2px;color:#6a6f79;transform:scaleX(0.8780);transform-origin:0 0">lms365</div>
<div class="a" style="left:116.30px;top:299.74px;font-size:8.2px;line-height:8.2px;color:#6a6f79;transform:scaleX(0.8693);transform-origin:0 0">&quot;You&#x27;re Wrong!&quot; (EDX Co 10691)</div>
<div class="a" style="left:229.10px;top:299.74px;font-size:8.2px;line-height:8.2px;color:#6a6f79;transform:scaleX(0.8780);transform-origin:0 0">Jon Doucette</div>
<div class="a" style="left:332.10px;top:299.74px;font-size:8.2px;line-height:8.2px;color:#6a6f79;transform:scaleX(0.9395);transform-origin:0 0">Optional</div>
<div class="a" style="left:383.80px;top:299.74px;font-size:8.2px;line-height:8.2px;color:#579250;transform:scaleX(0.9220);transform-origin:0 0">Compliant</div>
<div class="a" style="left:484.20px;top:299.74px;font-size:8.2px;line-height:8.2px;color:#579250;transform:scaleX(0.9176);transform-origin:0 0">Completed</div>
<div class="a" style="left:559.70px;top:299.74px;font-size:8.2px;line-height:8.2px;color:#6a6f79;transform:scaleX(0.8605);transform-origin:0 0">11/1/2023</div>
<div class="a" style="left:0;top:324.79px;width:590px;height:1px;background:#f0f1f4"></div>
<div class="a" style="left:3.80px;top:314.45px;font-size:8.2px;line-height:8.2px;color:#6a6f79;transform:scaleX(0.8780);transform-origin:0 0">lms365</div>
<div class="a" style="left:116.30px;top:314.45px;font-size:8.2px;line-height:8.2px;color:#6a6f79;transform:scaleX(0.8693);transform-origin:0 0">&quot;You&#x27;re Wrong!&quot; (EDX Co 10691)</div>
<div class="a" style="left:229.10px;top:314.45px;font-size:8.2px;line-height:8.2px;color:#6a6f79;transform:scaleX(0.8780);transform-origin:0 0">Jon Doucette</div>
<div class="a" style="left:332.10px;top:314.45px;font-size:8.2px;line-height:8.2px;color:#6a6f79;transform:scaleX(0.9395);transform-origin:0 0">Optional</div>
<div class="a" style="left:383.80px;top:314.45px;font-size:8.2px;line-height:8.2px;color:#e07880;transform:scaleX(0.9220);transform-origin:0 0">Not Compliant</div>
<div class="a" style="left:484.20px;top:314.45px;font-size:8.2px;line-height:8.2px;color:#ddaa45;transform:scaleX(0.9176);transform-origin:0 0">InProgress</div>
<div class="a" style="left:559.70px;top:314.45px;font-size:8.2px;line-height:8.2px;color:#6a6f79;transform:scaleX(0.8605);transform-origin:0 0">12/13/2023</div>
<div class="a" style="left:0;top:339.50px;width:590px;height:1px;background:#f0f1f4"></div>
<div class="a" style="left:3.80px;top:329.16px;font-size:8.2px;line-height:8.2px;color:#6a6f79;transform:scaleX(0.8780);transform-origin:0 0">lms365</div>
<div class="a" style="left:116.30px;top:329.16px;font-size:8.2px;line-height:8.2px;color:#6a6f79;transform:scaleX(0.8693);transform-origin:0 0">&quot;You&#x27;re Wrong!&quot; (EDX Co 10691)</div>
<div class="a" style="left:229.10px;top:329.16px;font-size:8.2px;line-height:8.2px;color:#6a6f79;transform:scaleX(0.8780);transform-origin:0 0">Michael Martinez</div>
<div class="a" style="left:332.10px;top:329.16px;font-size:8.2px;line-height:8.2px;color:#6a6f79;transform:scaleX(0.9395);transform-origin:0 0">Optional</div>
<div class="a" style="left:383.80px;top:329.16px;font-size:8.2px;line-height:8.2px;color:#579250;transform:scaleX(0.9220);transform-origin:0 0">Compliant</div>
<div class="a" style="left:484.20px;top:329.16px;font-size:8.2px;line-height:8.2px;color:#579250;transform:scaleX(0.9176);transform-origin:0 0">Completed</div>
<div class="a" style="left:559.70px;top:329.16px;font-size:8.2px;line-height:8.2px;color:#6a6f79;transform:scaleX(0.8605);transform-origin:0 0">9/27/2023</div>
<div class="a" style="left:0;top:354.21px;width:590px;height:1px;background:#f0f1f4"></div>
<div class="a" style="left:3.80px;top:343.87px;font-size:8.2px;line-height:8.2px;color:#6a6f79;transform:scaleX(0.8780);transform-origin:0 0">Elearningforcenorthamerica</div>
<div class="a" style="left:116.30px;top:343.87px;font-size:8.2px;line-height:8.2px;color:#6a6f79;transform:scaleX(0.8078);transform-origin:0 0">*ACK REQ* | FCIF 2019-09 | D...</div>
<div class="a" style="left:229.10px;top:343.87px;font-size:8.2px;line-height:8.2px;color:#6a6f79;transform:scaleX(0.8078);transform-origin:0 0">ELEARNINGFORCE USA</div>
<div class="a" style="left:332.10px;top:343.87px;font-size:8.2px;line-height:8.2px;color:#6a6f79;transform:scaleX(0.9395);transform-origin:0 0">Optional</div>
<div class="a" style="left:383.80px;top:343.87px;font-size:8.2px;line-height:8.2px;color:#e07880;transform:scaleX(0.9220);transform-origin:0 0">Not Compliant</div>
<div class="a" style="left:484.20px;top:343.87px;font-size:8.2px;line-height:8.2px;color:#e07880;transform:scaleX(0.9176);transform-origin:0 0">NotStarted</div>
<div class="a" style="left:559.70px;top:343.87px;font-size:8.2px;line-height:8.2px;color:#6a6f79;transform:scaleX(0.8605);transform-origin:0 0">7/21/2023</div>
<div class="a" style="left:0;top:368.92px;width:590px;height:1px;background:#f0f1f4"></div>
<div class="a" style="left:3.80px;top:358.58px;font-size:8.2px;line-height:8.2px;color:#6a6f79;transform:scaleX(0.8780);transform-origin:0 0">lms365</div>
<div class="a" style="left:116.30px;top:358.58px;font-size:8.2px;line-height:8.2px;color:#6a6f79;transform:scaleX(0.8693);transform-origin:0 0">1 Minute Call Evaluations (EDX...</div>
<div class="a" style="left:229.10px;top:358.58px;font-size:8.2px;line-height:8.2px;color:#6a6f79;transform:scaleX(0.8780);transform-origin:0 0">Alexander Iliasa</div>
<div class="a" style="left:332.10px;top:358.58px;font-size:8.2px;line-height:8.2px;color:#6a6f79;transform:scaleX(0.9395);transform-origin:0 0">Optional</div>
<div class="a" style="left:383.80px;top:358.58px;font-size:8.2px;line-height:8.2px;color:#e07880;transform:scaleX(0.9220);transform-origin:0 0">Not Compliant</div>
<div class="a" style="left:484.20px;top:358.58px;font-size:8.2px;line-height:8.2px;color:#e07880;transform:scaleX(0.9176);transform-origin:0 0">NotStarted</div>
<div class="a" style="left:559.70px;top:358.58px;font-size:8.2px;line-height:8.2px;color:#6a6f79;transform:scaleX(0.8605);transform-origin:0 0">6/22/2023</div>
</div>
<div class="a" style="left:921.5px;top:124.6px;width:4px;height:15.4px;border-radius:2px;background:#a8a8a8"></div>
<div class="a" style="left:332px;top:496px;width:400px;height:5px;border-radius:3px;background:#a6a6a6"></div>
<div class="a" style="left:0;top:506px;width:940px;height:1px;background:#e6e6f3"></div>
<svg class="a" style="left:4px;top:511px" width="10" height="9" viewBox="0 0 10 9"><rect x="0.5" y="0.5" width="9" height="8" fill="#e2e2ea" stroke="#d3d3dc" stroke-width="0.6"/></svg>
<div class="a" style="left:22.00px;top:510.70px;font-size:8.5px;line-height:8.5px;color:#bdbdc6;font-weight:400;letter-spacing:0.000px;transform:scaleX(0.8716);transform-origin:0 0">Selected period: 10-May-2023 to 09-May-2024</div>
<div class="a" style="left:400.80px;top:512.10px;font-size:8.5px;line-height:8.5px;color:#bdbdc6;font-weight:400;letter-spacing:0.000px;transform:scaleX(0.9178);transform-origin:0 0">Last refreshed: 12-Mar-2024 18:16:21</div>
<svg class="a" style="left:801px;top:510px" width="16" height="14" viewBox="0 0 16 14"><path d="M1.3 1 H14.7 V10.6 H11.6 L10.8 12.4 L9.6 10.6 H1.3Z" fill="none" stroke="#d3d3dc" stroke-width="0.8"/><path d="M7.7 8 L5.4 5.6 A1.3 1.3 0 0 1 7.7 4.2 A1.3 1.3 0 0 1 10 5.6Z" fill="none" stroke="#d3d3dc" stroke-width="0.7"/></svg>
<div class="a" style="left:820.80px;top:513.40px;font-size:8.5px;line-height:8.5px;color:#bdbdc6;font-weight:400;letter-spacing:0.000px;transform:scaleX(0.8476);transform-origin:0 0">Provide Feedback - Click Here</div>
<div class="a" style="left:0;top:0;width:940px;height:1px;background:#a2a2aa"></div>
<div class="a" style="left:0;top:0;width:1.2px;height:528px;background:#a2a2aa"></div>
<div class="a" style="left:938.4px;top:0;width:1.6px;height:528px;background:#a2a2aa"></div>
<div class="a" style="left:0;top:526.6px;width:940px;height:1.4px;background:#a2a2aa"></div>
</div></body></html>
